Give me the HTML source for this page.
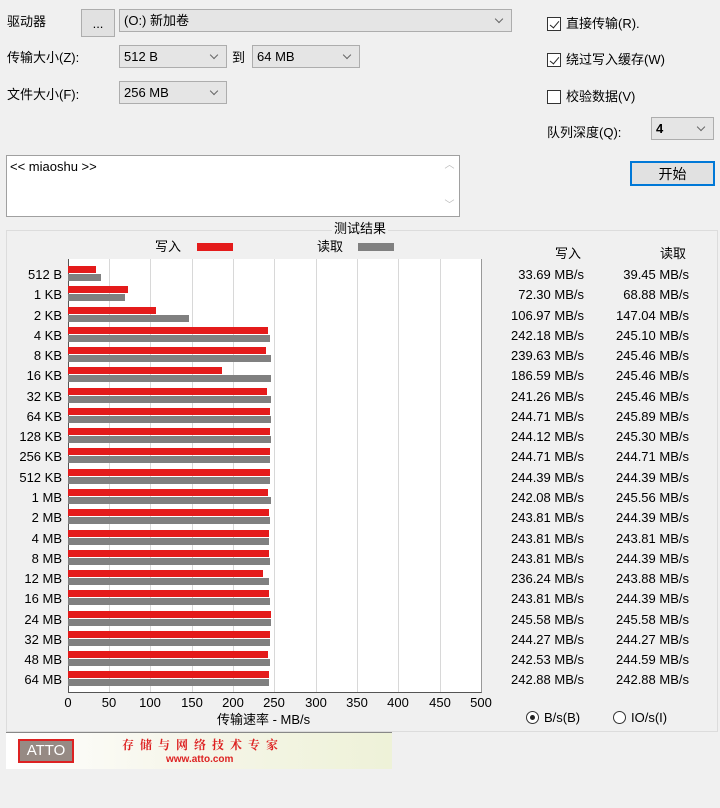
<!DOCTYPE html><html><head><meta charset="utf-8"><style>
*{margin:0;padding:0;box-sizing:border-box}
body{width:720px;height:808px;background:#f0f0f0;font-family:"Liberation Sans","Noto Sans CJK SC",sans-serif;font-size:13px;line-height:16px;color:#000;position:relative;overflow:hidden}
.a{position:absolute;white-space:nowrap}
.sel{position:absolute;background:#e5e5e5;border:1px solid #adadad;height:23px;padding:3px 0 0 4px;font-size:13px}
.sel:after{content:"";position:absolute;right:9px;top:6px;width:5px;height:5px;border-right:1px solid #666;border-bottom:1px solid #666;transform:rotate(45deg)}
.cb{position:absolute;width:14px;height:14px;border:1px solid #333;background:#fff}
.cb.on:after{content:"";position:absolute;left:4px;top:1px;width:4px;height:8px;border-right:1.5px solid #222;border-bottom:1.5px solid #222;transform:rotate(40deg)}
.row{position:absolute;left:0;width:720px;height:16px}
.row .l{position:absolute;right:658px;top:1px;font-size:13px}
.row .w{position:absolute;left:68px;top:0;height:7px;background:#e41b1b}
.row .r{position:absolute;left:68px;top:8px;height:7px;background:#808080}
.row .v1{position:absolute;right:136px;top:1px}
.row .v2{position:absolute;right:31px;top:1px}
.g{position:absolute;top:259px;height:433px;width:1px;background:#d8d8d8}
.t{position:absolute;top:695px;width:40px;margin-left:-20px;text-align:center}
</style></head><body>
<div class="a" style="left:7px;top:14px">驱动器</div>
<div class="a" style="left:81px;top:9px;width:34px;height:28px;background:#e1e1e1;border:1px solid #adadad;text-align:center;padding-top:6px">...</div>
<div class="sel" style="left:119px;top:9px;width:393px">(O:) 新加卷</div>
<div class="a" style="left:7px;top:50px">传输大小(Z):</div>
<div class="sel" style="left:119px;top:45px;width:108px">512 B</div>
<div class="a" style="left:232px;top:50px">到</div>
<div class="sel" style="left:252px;top:45px;width:108px">64 MB</div>
<div class="a" style="left:7px;top:87px">文件大小(F):</div>
<div class="sel" style="left:119px;top:81px;width:108px">256 MB</div>
<div class="cb on" style="left:547px;top:17px"></div><div class="a" style="left:566px;top:16px">直接传输(R).</div>
<div class="cb on" style="left:547px;top:53px"></div><div class="a" style="left:566px;top:52px">绕过写入缓存(W)</div>
<div class="cb" style="left:547px;top:90px"></div><div class="a" style="left:566px;top:89px">校验数据(V)</div>
<div class="a" style="left:547px;top:125px">队列深度(Q):</div>
<div class="sel" style="left:651px;top:117px;width:63px;font-weight:bold">4</div>
<div class="a" style="left:630px;top:161px;width:85px;height:25px;background:#e1e1e1;border:1px solid #0078d7;box-shadow:inset 0 0 0 1px #0078d7;text-align:center;padding-top:4px;font-size:14px">开始</div>
<div class="a" style="left:6px;top:155px;width:454px;height:62px;background:#fff;border:1px solid #a0a0a0;padding:3px 3px">&lt;&lt; miaoshu &gt;&gt;</div>
<div class="a" style="left:440px;top:156px;width:19px;height:60px;background:#fff;color:#bbb;font-size:10px;text-align:center;line-height:20px">︿<br><br>﹀</div>
<div class="a" style="left:6px;top:230px;width:712px;height:502px;border:1px solid #dcdcdc"></div>
<div class="a" style="left:332px;top:221px;background:#f0f0f0;padding:0 2px">测试结果</div>
<div class="a" style="left:155px;top:239px">写入</div><div class="a" style="left:197px;top:243px;width:36px;height:8px;background:#e41b1b"></div>
<div class="a" style="left:317px;top:239px">读取</div><div class="a" style="left:358px;top:243px;width:36px;height:8px;background:#808080"></div>
<div class="a" style="left:555px;top:246px">写入</div><div class="a" style="left:660px;top:246px">读取</div>
<div class="a" style="left:68px;top:259px;width:414px;height:434px;background:#fff;border-left:1px solid #555;border-bottom:1px solid #555;border-right:1px solid #999"></div>
<div class="g" style="left:109px"></div><div class="g" style="left:150px"></div><div class="g" style="left:192px"></div><div class="g" style="left:233px"></div><div class="g" style="left:274px"></div><div class="g" style="left:316px"></div><div class="g" style="left:357px"></div><div class="g" style="left:398px"></div><div class="g" style="left:440px"></div>
<div class="row" style="top:266px"><span class="l">512 B</span><div class="w" style="width:28px"></div><div class="r" style="width:33px"></div><span class="v1">33.69 MB/s</span><span class="v2">39.45 MB/s</span></div>
<div class="row" style="top:286px"><span class="l">1 KB</span><div class="w" style="width:60px"></div><div class="r" style="width:57px"></div><span class="v1">72.30 MB/s</span><span class="v2">68.88 MB/s</span></div>
<div class="row" style="top:307px"><span class="l">2 KB</span><div class="w" style="width:88px"></div><div class="r" style="width:121px"></div><span class="v1">106.97 MB/s</span><span class="v2">147.04 MB/s</span></div>
<div class="row" style="top:327px"><span class="l">4 KB</span><div class="w" style="width:200px"></div><div class="r" style="width:202px"></div><span class="v1">242.18 MB/s</span><span class="v2">245.10 MB/s</span></div>
<div class="row" style="top:347px"><span class="l">8 KB</span><div class="w" style="width:198px"></div><div class="r" style="width:203px"></div><span class="v1">239.63 MB/s</span><span class="v2">245.46 MB/s</span></div>
<div class="row" style="top:367px"><span class="l">16 KB</span><div class="w" style="width:154px"></div><div class="r" style="width:203px"></div><span class="v1">186.59 MB/s</span><span class="v2">245.46 MB/s</span></div>
<div class="row" style="top:388px"><span class="l">32 KB</span><div class="w" style="width:199px"></div><div class="r" style="width:203px"></div><span class="v1">241.26 MB/s</span><span class="v2">245.46 MB/s</span></div>
<div class="row" style="top:408px"><span class="l">64 KB</span><div class="w" style="width:202px"></div><div class="r" style="width:203px"></div><span class="v1">244.71 MB/s</span><span class="v2">245.89 MB/s</span></div>
<div class="row" style="top:428px"><span class="l">128 KB</span><div class="w" style="width:202px"></div><div class="r" style="width:203px"></div><span class="v1">244.12 MB/s</span><span class="v2">245.30 MB/s</span></div>
<div class="row" style="top:448px"><span class="l">256 KB</span><div class="w" style="width:202px"></div><div class="r" style="width:202px"></div><span class="v1">244.71 MB/s</span><span class="v2">244.71 MB/s</span></div>
<div class="row" style="top:469px"><span class="l">512 KB</span><div class="w" style="width:202px"></div><div class="r" style="width:202px"></div><span class="v1">244.39 MB/s</span><span class="v2">244.39 MB/s</span></div>
<div class="row" style="top:489px"><span class="l">1 MB</span><div class="w" style="width:200px"></div><div class="r" style="width:203px"></div><span class="v1">242.08 MB/s</span><span class="v2">245.56 MB/s</span></div>
<div class="row" style="top:509px"><span class="l">2 MB</span><div class="w" style="width:201px"></div><div class="r" style="width:202px"></div><span class="v1">243.81 MB/s</span><span class="v2">244.39 MB/s</span></div>
<div class="row" style="top:530px"><span class="l">4 MB</span><div class="w" style="width:201px"></div><div class="r" style="width:201px"></div><span class="v1">243.81 MB/s</span><span class="v2">243.81 MB/s</span></div>
<div class="row" style="top:550px"><span class="l">8 MB</span><div class="w" style="width:201px"></div><div class="r" style="width:202px"></div><span class="v1">243.81 MB/s</span><span class="v2">244.39 MB/s</span></div>
<div class="row" style="top:570px"><span class="l">12 MB</span><div class="w" style="width:195px"></div><div class="r" style="width:201px"></div><span class="v1">236.24 MB/s</span><span class="v2">243.88 MB/s</span></div>
<div class="row" style="top:590px"><span class="l">16 MB</span><div class="w" style="width:201px"></div><div class="r" style="width:202px"></div><span class="v1">243.81 MB/s</span><span class="v2">244.39 MB/s</span></div>
<div class="row" style="top:611px"><span class="l">24 MB</span><div class="w" style="width:203px"></div><div class="r" style="width:203px"></div><span class="v1">245.58 MB/s</span><span class="v2">245.58 MB/s</span></div>
<div class="row" style="top:631px"><span class="l">32 MB</span><div class="w" style="width:202px"></div><div class="r" style="width:202px"></div><span class="v1">244.27 MB/s</span><span class="v2">244.27 MB/s</span></div>
<div class="row" style="top:651px"><span class="l">48 MB</span><div class="w" style="width:200px"></div><div class="r" style="width:202px"></div><span class="v1">242.53 MB/s</span><span class="v2">244.59 MB/s</span></div>
<div class="row" style="top:671px"><span class="l">64 MB</span><div class="w" style="width:201px"></div><div class="r" style="width:201px"></div><span class="v1">242.88 MB/s</span><span class="v2">242.88 MB/s</span></div>
<div class="t" style="left:68px">0</div><div class="t" style="left:109px">50</div><div class="t" style="left:150px">100</div><div class="t" style="left:192px">150</div><div class="t" style="left:233px">200</div><div class="t" style="left:274px">250</div><div class="t" style="left:316px">300</div><div class="t" style="left:357px">350</div><div class="t" style="left:398px">400</div><div class="t" style="left:440px">450</div><div class="t" style="left:481px">500</div>
<div class="a" style="left:217px;top:712px">传输速率 - MB/s</div>
<div class="a" style="left:526px;top:711px;width:13px;height:13px;border:1px solid #333;border-radius:50%;background:#fff"><div style="position:absolute;left:3px;top:3px;width:5px;height:5px;border-radius:50%;background:#222"></div></div>
<div class="a" style="left:544px;top:710px">B/s(B)</div>
<div class="a" style="left:613px;top:711px;width:13px;height:13px;border:1px solid #333;border-radius:50%;background:#fff"></div>
<div class="a" style="left:631px;top:710px">IO/s(I)</div>
<div class="a" style="left:6px;top:732px;width:386px;height:37px;background:linear-gradient(90deg,#fff 0%,#f5f5e8 50%,#eef2d8 100%);border-top:1px solid #888"></div>
<div class="a" style="left:18px;top:739px;width:56px;height:24px;border:2px solid #d22;background:#968a84;color:#fff;font-size:15px;text-align:center;padding-top:2px">ATTO</div>
<div class="a" style="left:122px;top:737px;color:#d22;font-size:12px;font-weight:bold;letter-spacing:6px;font-family:'Noto Serif CJK SC',serif">存储与网络技术专家</div>
<div class="a" style="left:166px;top:752px;color:#d22;font-size:10px;font-weight:bold">www.atto.com</div>
</body></html>
